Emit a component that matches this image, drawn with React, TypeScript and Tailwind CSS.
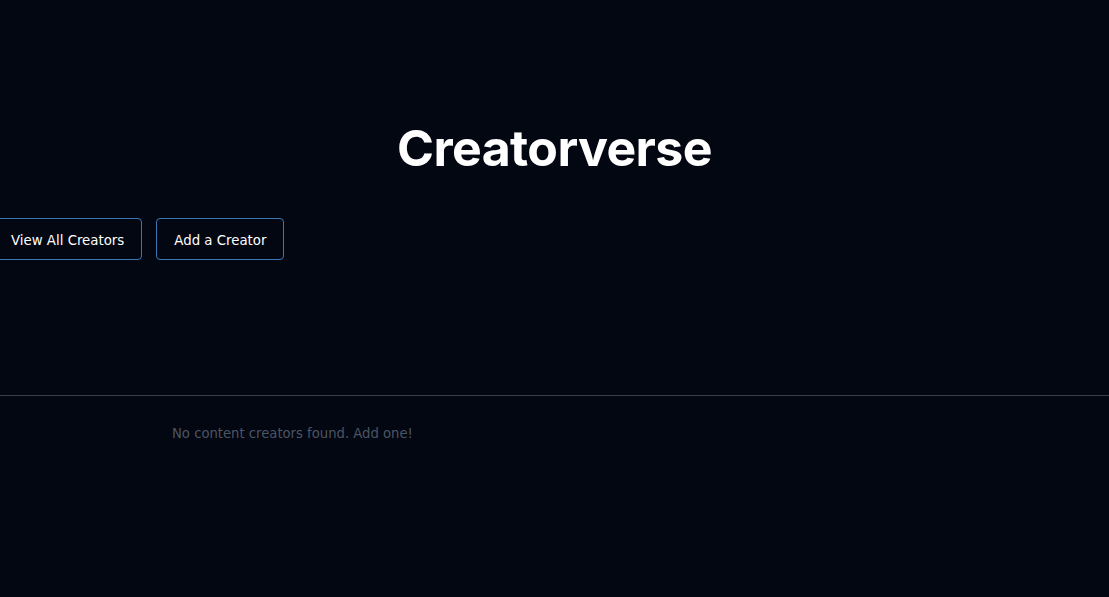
export default function App() {
  return (
    <div className="min-h-[597px] bg-[#030712] text-white">
      <div className="flex flex-col">
        <div className="h-[395px] flex flex-col">
          <h1 className="pt-[113px] text-center text-[50px] leading-[70px] font-bold tracking-[-0.6px] font-['Inter',sans-serif]">
            Creatorverse
          </h1>
          <div className="mt-[35px] flex gap-[14px] ml-[-7px] font-['DejaVu_Sans',sans-serif] text-[13.333px]">
            <button className="h-[42px] px-[17px] pt-[3px] rounded-[4px] border border-[#3a78b5] text-white bg-transparent">
              View All Creators
            </button>
            <button className="h-[42px] px-[17px] pt-[3px] rounded-[4px] border border-[#3a78b5] text-white bg-transparent">
              Add a Creator
            </button>
          </div>
        </div>
        <div className="h-px bg-[#374151]" />
        <p className="mt-[28px] ml-[172px] text-[13.2px] text-[#4b5563] font-['DejaVu_Sans',sans-serif]">
          No content creators found. Add one!
        </p>
      </div>
    </div>
  );
}
